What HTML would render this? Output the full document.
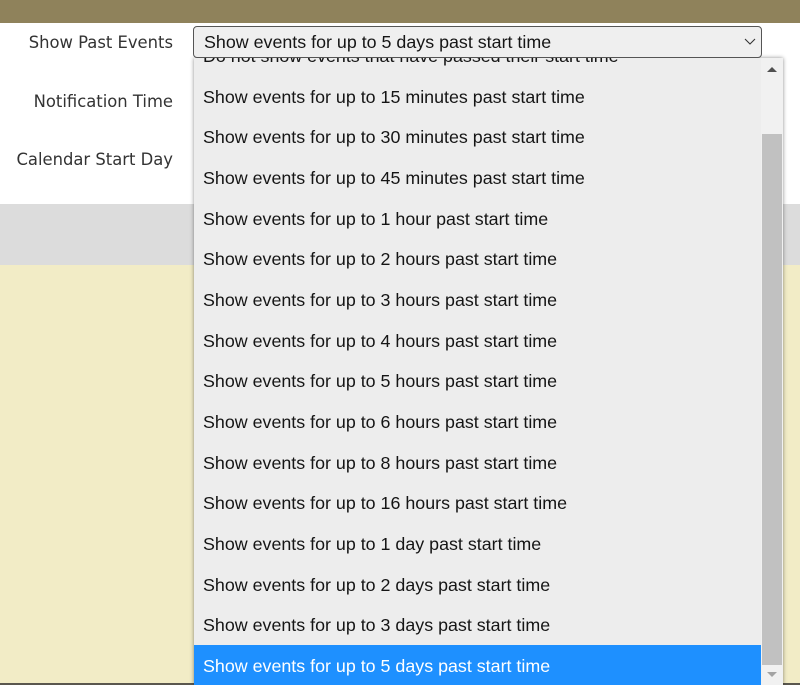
<!DOCTYPE html>
<html><head><meta charset="utf-8"><style>
html,body{margin:0;padding:0;width:800px;height:685px;overflow:hidden;background:#fff}
div{position:absolute;box-sizing:border-box}
.l{font:16.4px/24px "DejaVu Sans",sans-serif;color:#333;right:627px;white-space:nowrap}
.o{left:9px;font:17.85px/24px "Liberation Sans",sans-serif;color:#151515;white-space:nowrap}
</style></head><body>
<div style="left:0;top:0;width:800px;height:23px;background:#8f825b"></div>
<div style="left:0;top:204px;width:800px;height:61px;background:#dcdcdc"></div>
<div style="left:0;top:265px;width:800px;height:418px;background:#f2ecc6"></div>
<div style="left:0;top:683px;width:800px;height:2px;background:#5a574e"></div>
<div class="l" style="top:31px">Show Past Events</div>
<div class="l" style="top:90px">Notification Time</div>
<div class="l" style="top:148px">Calendar Start Day</div>
<div style="left:194px;top:58px;width:589px;height:627px;background:#ededed;box-shadow:0 0 4px rgba(0,0,0,.45);overflow:hidden">
<div class="o" style="top:-14px">Do not show events that have passed their start time</div>
<div class="o" style="top:27px">Show events for up to 15 minutes past start time</div>
<div class="o" style="top:67px">Show events for up to 30 minutes past start time</div>
<div class="o" style="top:108px">Show events for up to 45 minutes past start time</div>
<div class="o" style="top:149px">Show events for up to 1 hour past start time</div>
<div class="o" style="top:189px">Show events for up to 2 hours past start time</div>
<div class="o" style="top:230px">Show events for up to 3 hours past start time</div>
<div class="o" style="top:271px">Show events for up to 4 hours past start time</div>
<div class="o" style="top:311px">Show events for up to 5 hours past start time</div>
<div class="o" style="top:352px">Show events for up to 6 hours past start time</div>
<div class="o" style="top:393px">Show events for up to 8 hours past start time</div>
<div class="o" style="top:433px">Show events for up to 16 hours past start time</div>
<div class="o" style="top:474px">Show events for up to 1 day past start time</div>
<div class="o" style="top:515px">Show events for up to 2 days past start time</div>
<div class="o" style="top:555px">Show events for up to 3 days past start time</div>
<div style="left:0;top:587px;width:567px;height:40px;background:#1e90ff"></div>
<div class="o" style="top:596px;color:#fff">Show events for up to 5 days past start time</div>
<div style="left:567px;top:0;width:22px;height:627px;background:#f1f1f1"></div>
<div style="left:568px;top:76px;width:20px;height:531px;background:#c1c1c1"></div>
<svg style="position:absolute;left:571px;top:7px" width="14" height="8"><path d="M2 7L7 2L12 7Z" fill="#505050"/></svg>
<svg style="position:absolute;left:571px;top:612px" width="14" height="8"><path d="M2 2L7 7L12 2Z" fill="#a3a3a3"/></svg>
</div>
<div style="left:193px;top:26px;width:569px;height:32px;background:#efefef;border:1px solid #555;border-radius:4px"></div>
<div style="left:204px;top:30px;font:17.85px/24px 'Liberation Sans',sans-serif;color:#151515;white-space:nowrap">Show events for up to 5 days past start time</div>
<svg style="position:absolute;left:743px;top:37px" width="14" height="10"><path d="M2 2L7 7L12 2" fill="none" stroke="#333" stroke-width="1.1"/></svg>
</body></html>
